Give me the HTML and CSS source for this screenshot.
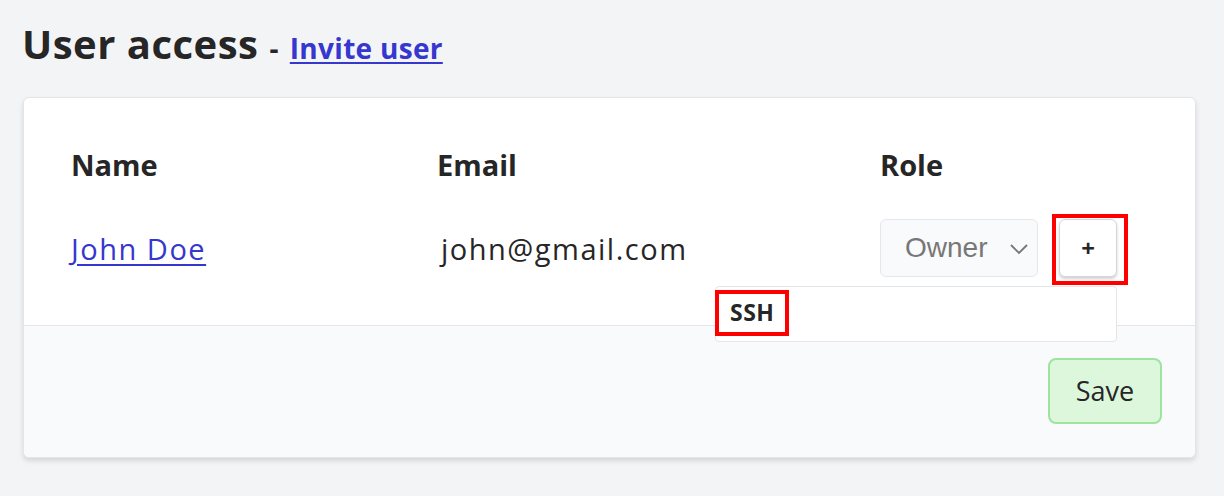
FILE: index.html
```html
<!DOCTYPE html>
<html>
<head>
<meta charset="utf-8">
<link rel="stylesheet" href="styles.css">
</head>
<body>
<h1 class="title">User access <span class="dash">-</span> <a class="invite" href="#">Invite user</a></h1>
<div class="card">
  <div class="card-body">
    <div class="grid">
      <div class="th">Name</div>
      <div class="th">Email</div>
      <div class="th">Role</div>
      <div class="td"><a class="name-link" href="#">John Doe</a></div>
      <div class="td email">john@gmail.com</div>
      <div class="td role">
        <div class="select">
          <span>Owner</span>
          <svg class="chev" width="20" height="12" viewBox="0 0 20 12"><path d="M2 2 L10 10 L18 2" fill="none" stroke="#777" stroke-width="1.8"/></svg>
        </div>
        <div class="add-wrap">
          <button class="add">+</button>
          <div class="hl hl-add"></div>
        </div>
        <div class="dropdown">
          <div class="opt">SSH</div>
          <div class="hl hl-ssh"></div>
        </div>
      </div>
    </div>
  </div>
  <div class="card-foot">
    <button class="save">Save</button>
  </div>
</div>
</body>
</html>
```

FILE: styles.css
```css
* { box-sizing: border-box; }
html, body { margin: 0; padding: 0; }
body {
  background: #f3f4f6;
  font-family: "Open Sans", "Noto Sans", sans-serif;
  color: #262626;
  width: 1224px;
  height: 496px;
  overflow: hidden;
}
.title {
  margin: 0;
  padding: 15px 0 0 22px;
  font-size: 40px;
  font-weight: 700;
  line-height: 58px;
  color: #262626;
  letter-spacing: 0.5px;
}
.dash { font-size: 28px; }
.invite {
  font-size: 28px;
  letter-spacing: 0.3px;
  color: #3537cf;
  text-decoration: underline;
  text-underline-offset: 3px;
  text-decoration-thickness: 2px;
}
.card {
  margin: 20px 0 0 23px;
  width: 1173px;
  background: #fff;
  border: 1px solid #e3e5e8;
  border-radius: 6px;
  box-shadow: 0 3px 5px rgba(0,0,0,0.12);
}
.card-body {
  padding: 40px 0 0 47px;
  height: 227px;
  position: relative;
}
.grid {
  display: grid;
  grid-template-columns: 366px 443px 1fr;
  grid-template-rows: 54px 85px;
}
.th {
  font-size: 29px;
  font-weight: 700;
  line-height: 54px;
  color: #262626;
}
.td {
  font-size: 29px;
  letter-spacing: 1.5px;
  display: flex;
  align-items: center;
  height: 58px;
  margin-top: 27px;
}
.name-link {
  color: #3537cf;
  text-decoration: underline;
  text-underline-offset: 4px;
  text-decoration-thickness: 1.5px;
}
.email { padding-left: 4px; color: #262626; }
.role {
  position: relative;
  gap: 21px;
}
.select {
  width: 158px;
  height: 58px;
  background: #f9fafb;
  border: 1px solid #e5e7eb;
  border-radius: 6px;
  display: flex;
  align-items: center;
  justify-content: space-between;
  padding: 0 8px 0 24px;
  font-family: "Liberation Sans", Arial, sans-serif;
  font-size: 28px;
  letter-spacing: 0;
  color: #777;
}
.chev { margin-top: 2px; }
.add-wrap { position: relative; }
.add {
  width: 58px;
  height: 58px;
  background: #fff;
  border: 1px solid #d4d6da;
  border-radius: 6px;
  box-shadow: 0 2px 3px rgba(0,0,0,0.18);
  font-family: "Open Sans", sans-serif;
  font-size: 24px;
  font-weight: 700;
  color: #262626;
  display: flex;
  align-items: center;
  justify-content: center;
  padding: 0 0 2px 0;
}
.hl {
  position: absolute;
  border: 4px solid #f00;
}
.hl-add {
  left: -7px;
  top: -5px;
  width: 76px;
  height: 71px;
}
.dropdown {
  position: absolute;
  left: -165px;
  top: 67px;
  width: 402px;
  height: 56px;
  background: #fff;
  border: 1px solid #e3e5e8;
  border-radius: 4px;
  z-index: 2;
}
.opt {
  font-size: 23px;
  font-weight: 700;
  letter-spacing: 0.5px;
  color: #262626;
  padding: 9px 0 0 14px;
  line-height: 32px;
}
.hl-ssh {
  left: -1px;
  top: 3px;
  width: 74px;
  height: 46px;
}
.card-foot {
  background: #f9fafb;
  border-top: 1px solid #e3e5e8;
  border-radius: 0 0 6px 6px;
  padding: 32px 33px 33px 0;
  display: flex;
  justify-content: flex-end;
}
.save {
  width: 114px;
  height: 66px;
  background: #dcf7dc;
  border: 2px solid #9ee39e;
  border-radius: 8px;
  font-family: "Open Sans", sans-serif;
  font-size: 27px;
  color: #262626;
  padding: 0 0 2px 0;
}
```
